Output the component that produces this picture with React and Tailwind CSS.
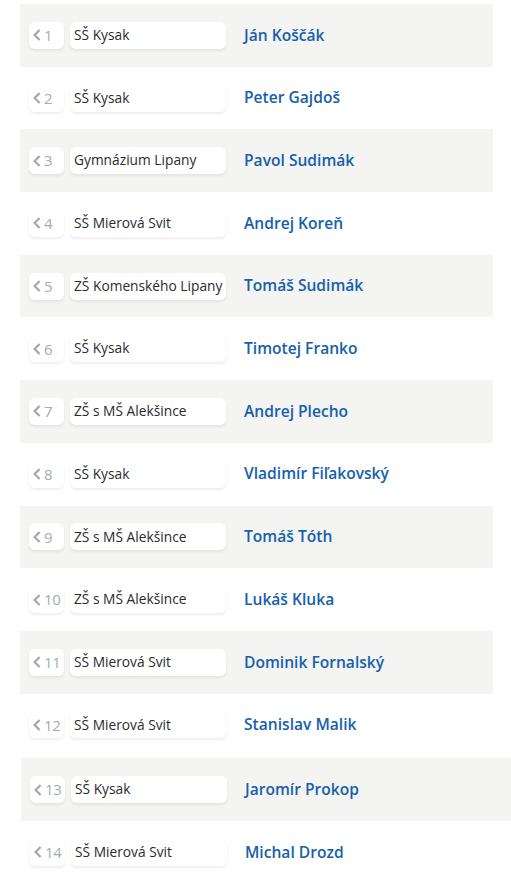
import React from 'react';

const rows = [
  { n: 1, school: 'SŠ Kysak', name: 'Ján Koščák' },
  { n: 2, school: 'SŠ Kysak', name: 'Peter Gajdoš' },
  { n: 3, school: 'Gymnázium Lipany', name: 'Pavol Sudimák' },
  { n: 4, school: 'SŠ Mierová Svit', name: 'Andrej Koreň' },
  { n: 5, school: 'ZŠ Komenského Lipany', name: 'Tomáš Sudimák' },
  { n: 6, school: 'SŠ Kysak', name: 'Timotej Franko' },
  { n: 7, school: 'ZŠ s MŠ Alekšince', name: 'Andrej Plecho' },
  { n: 8, school: 'SŠ Kysak', name: 'Vladimír Fiľakovský' },
  { n: 9, school: 'ZŠ s MŠ Alekšince', name: 'Tomáš Tóth' },
  { n: 10, school: 'ZŠ s MŠ Alekšince', name: 'Lukáš Kluka' },
  { n: 11, school: 'SŠ Mierová Svit', name: 'Dominik Fornalský' },
  { n: 12, school: 'SŠ Mierová Svit', name: 'Stanislav Malik' },
];

const tail = [
  { n: 13, school: 'SŠ Kysak', name: 'Jaromír Prokop' },
  { n: 14, school: 'SŠ Mierová Svit', name: 'Michal Drozd' },
];

const Chevron = () => (
  <svg width="8" height="12" viewBox="0 0 8 12" className="shrink-0">
    <path d="M6.6 1 L1.6 6 L6.6 11" fill="none" stroke="#a2a8ae" strokeWidth="2.2" strokeLinejoin="miter" />
  </svg>
);

const Row = ({ r, gray }) => (
  <div className={`h-[62.7px] flex items-center pl-[9px] ${gray ? 'bg-[#f4f4f3]' : 'bg-white'}`}>
    <div className="w-[35px] h-[27px] rounded-md bg-white shadow-[0_2px_3px_rgba(0,0,0,0.07)] flex items-center gap-[3px] pl-[4px] text-[15px] font-medium text-[#a6acb2] tracking-[-0.4px]">
      <Chevron />
      <span>{r.n}</span>
    </div>
    <div className="ml-[6px] w-[156px] h-[27px] rounded-md bg-white shadow-[0_2px_3px_rgba(0,0,0,0.07)] flex items-center pl-[4px] text-[13.75px] text-[#2b2b2b] whitespace-nowrap overflow-hidden">
      {r.school}
    </div>
    <div className="ml-[18px] text-[15.6px] font-semibold text-[#1660ac]">{r.name}</div>
  </div>
);

export default function App() {
  return (
    <div className="bg-white min-h-[877px] overflow-hidden pt-[4px]" style={{ fontFamily: '"Open Sans", sans-serif' }}>
      <div className="ml-[20px] w-[473px]">
        {rows.map((r, i) => (
          <Row key={r.n} r={r} gray={i % 2 === 0} />
        ))}
      </div>
      <div className="ml-[21px] w-[490px] mt-[2px]">
        {tail.map((r, i) => (
          <Row key={r.n} r={r} gray={i % 2 === 0} />
        ))}
      </div>
    </div>
  );
}
